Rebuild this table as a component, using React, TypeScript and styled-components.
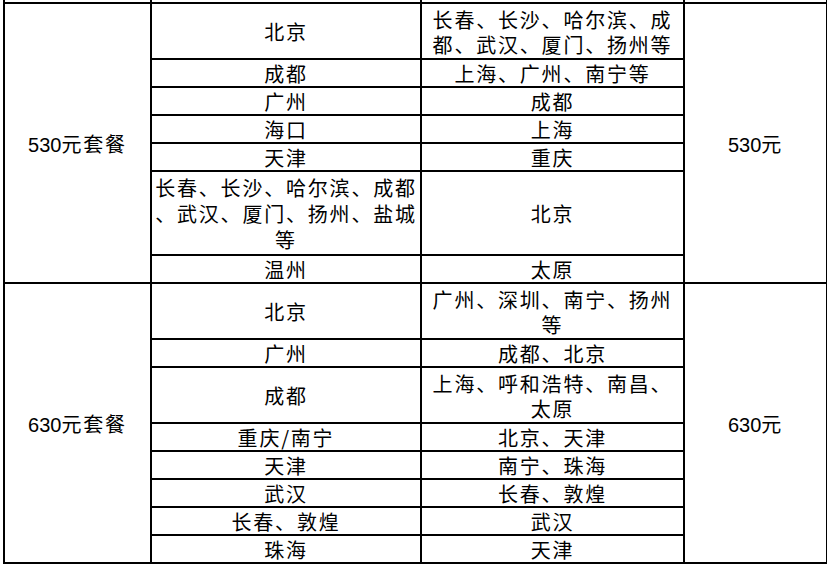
import React from 'react';
import styled, { createGlobalStyle } from 'styled-components';

const Global = createGlobalStyle`
  html, body { margin: 0; padding: 0; background: #fff; }
  body { width: 827px; height: 565px; overflow: hidden; }
`;

const Sheet = styled.div`
  padding-left: 3px;
  height: 565px;
  overflow: hidden;
  background: #fff;
`;

const Table = styled.table`
  border-collapse: collapse;
  table-layout: fixed;
  width: 823px;
  margin-top: -26px;
  font-family: 'Noto Sans CJK SC', 'Noto Sans', sans-serif;
  font-size: 20px;
  color: #000;
  border: 2px solid #000;
`;

const Cell = styled.td<{ $lines: number; $lh?: number }>`
  border: 2px solid #000;
  padding: 2px 0 0 0;
  height: ${(p) => p.$lines * 28 - 4}px;
  line-height: ${(p) => p.$lh ?? 24}px;
  text-align: center;
  vertical-align: middle;
  white-space: nowrap;
  letter-spacing: 1.8px;
`;

const Num = styled.span`
  font-family: 'Liberation Sans', sans-serif;
  letter-spacing: 0;
`;

type Row = { from: string[]; to: string[] };
type Group = { label: React.ReactNode; price: React.ReactNode; rows: Row[] };

const groups: Group[] = [
  {
    label: (
      <>
        <Num>530</Num>元套餐
      </>
    ),
    price: (
      <>
        <Num>530</Num>元
      </>
    ),
    rows: [
      { from: ['北京'], to: ['长春、长沙、哈尔滨、成', '都、武汉、厦门、扬州等'] },
      { from: ['成都'], to: ['上海、广州、南宁等'] },
      { from: ['广州'], to: ['成都'] },
      { from: ['海口'], to: ['上海'] },
      { from: ['天津'], to: ['重庆'] },
      { from: ['长春、长沙、哈尔滨、成都', '、武汉、厦门、扬州、盐城', '等'], to: ['北京'] },
      { from: ['温州'], to: ['太原'] },
    ],
  },
  {
    label: (
      <>
        <Num>630</Num>元套餐
      </>
    ),
    price: (
      <>
        <Num>630</Num>元
      </>
    ),
    rows: [
      { from: ['北京'], to: ['广州、深圳、南宁、扬州', '等'] },
      { from: ['广州'], to: ['成都、北京'] },
      { from: ['成都'], to: ['上海、呼和浩特、南昌、', '太原'] },
      { from: ['重庆/南宁'], to: ['北京、天津'] },
      { from: ['天津'], to: ['南宁、珠海'] },
      { from: ['武汉'], to: ['长春、敦煌'] },
      { from: ['长春、敦煌'], to: ['武汉'] },
      { from: ['珠海'], to: ['天津'] },
    ],
  },
];

const lineHeight = (n: number) => (n === 1 ? 24 : n === 2 ? 25 : 26);

const Lines: React.FC<{ items: string[] }> = ({ items }) => (
  <>
    {items.map((t, i) => (
      <React.Fragment key={i}>
        {i > 0 && <br />}
        {t}
      </React.Fragment>
    ))}
  </>
);

export default function App() {
  return (
    <Sheet>
      <Global />
      <Table>
        <colgroup>
          <col style={{ width: 147 }} />
          <col style={{ width: 270 }} />
          <col style={{ width: 263 }} />
          <col style={{ width: 143 }} />
        </colgroup>
        <tbody>
          <tr>
            <Cell $lines={1} />
            <Cell $lines={1}>南宁</Cell>
            <Cell $lines={1}>北京</Cell>
            <Cell $lines={1} />
          </tr>
          {groups.map((g, gi) => {
            const total = g.rows.reduce((s, r) => s + Math.max(r.from.length, r.to.length), 0);
            return g.rows.map((r, ri) => {
              const lines = Math.max(r.from.length, r.to.length);
              return (
                <tr key={`${gi}-${ri}`}>
                  {ri === 0 && (
                    <Cell $lines={total} rowSpan={g.rows.length}>
                      {g.label}
                    </Cell>
                  )}
                  <Cell $lines={lines} $lh={lineHeight(r.from.length)}>
                    <Lines items={r.from} />
                  </Cell>
                  <Cell $lines={lines} $lh={lineHeight(r.to.length)}>
                    <Lines items={r.to} />
                  </Cell>
                  {ri === 0 && (
                    <Cell $lines={total} rowSpan={g.rows.length}>
                      {g.price}
                    </Cell>
                  )}
                </tr>
              );
            });
          })}
        </tbody>
      </Table>
    </Sheet>
  );
}
